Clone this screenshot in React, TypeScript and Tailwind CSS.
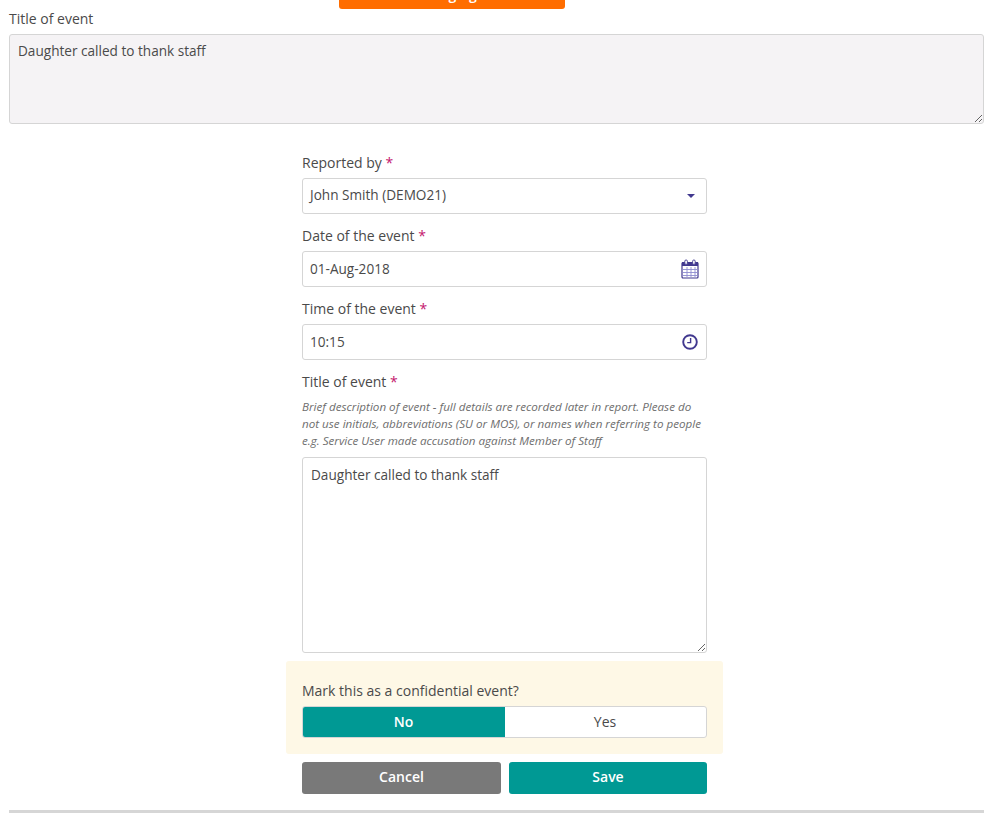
import type { ReactNode } from 'react'

// Form for a reported event, cropped as if the page was scrolled a little

const labelClass = 'block text-[14px] leading-[20px] font-medium text-[#4a4a4a]'
const inputClass =
  'flex h-[36px] items-center justify-between rounded-[3px] border border-[#d5d5d5] bg-white pl-[7px] pr-[8px] text-[13.6px] text-[#4a4a4a]'

function Required() {
  return <span className="text-[#c4166e]"> *</span>
}

function CalendarIcon() {
  return (
    <svg width="18" height="20" viewBox="0 0 18 20" fill="none" className="-mr-[1px] block">
      <rect x="1" y="3.5" width="16" height="15.5" rx="1" stroke="#41388f" strokeWidth="1.2" />
      <rect x="1" y="3" width="16" height="4" fill="#41388f" />
      <path d="M6 8v10M10 8v10M14 8v10M1.5 10.5h15M1.5 13.5h15M1.5 16.5h15" stroke="#8f8cd0" strokeWidth="0.9" />
      <rect x="3.8" y="1" width="2.6" height="4.4" rx="1.2" fill="#fff" stroke="#41388f" strokeWidth="0.9" />
      <rect x="11.6" y="1" width="2.6" height="4.4" rx="1.2" fill="#fff" stroke="#41388f" strokeWidth="0.9" />
    </svg>
  )
}

function ClockIcon() {
  return (
    <svg width="16" height="16" viewBox="0 0 16 16" fill="none" className="block">
      <circle cx="8" cy="8" r="6.8" stroke="#41388f" strokeWidth="1.9" />
      <path d="M8.6 4v4.6H5.2" stroke="#41388f" strokeWidth="1.4" />
    </svg>
  )
}

function Field({ label, children }: { label: string; children: ReactNode }) {
  return (
    <div className="mb-[12px]">
      <label className={labelClass}>
        {label}
        <Required />
      </label>
      <div className={`${inputClass} mt-[5px]`}>{children}</div>
    </div>
  )
}

export default function App() {
  return (
    <div className="h-[813px] overflow-hidden bg-white font-['Open_Sans',sans-serif]">
      <div className="ml-[339px] flex h-[9px] w-[226px] items-end">
        <button className="flex h-[30px] w-full shrink-0 items-center justify-center rounded-[3px] bg-[#ff6d00] text-[14px] font-semibold text-white">
          Staging
        </button>
      </div>

      <div className="ml-[9px] w-[975px]">
        <label className={labelClass}>Title of event</label>
        <textarea
          readOnly
          defaultValue="Daughter called to thank staff"
          className="mt-[5px] block h-[90px] w-full rounded-[3px] border border-[#d5d5d5] bg-[#f5f3f5] px-[8px] py-[6px] text-[13.6px] leading-[20px] text-[#4a4a4a] outline-none"
        />
      </div>

      <div className="ml-[302px] mt-[29px] w-[405px]">
        <Field label="Reported by">
          <span className="-translate-y-[1px]">John Smith (DEMO21)</span>
          <span className="mr-[3px] h-0 w-0 border-x-[4px] border-t-[4px] border-x-transparent border-t-[#41388f]" />
        </Field>

        <Field label="Date of the event">
          <span>01-Aug-2018</span>
          <CalendarIcon />
        </Field>

        <Field label="Time of the event">
          <span>10:15</span>
          <ClockIcon />
        </Field>

        <label className={labelClass}>
          Title of event
          <Required />
        </label>
        <p className="mt-[6px] text-[11.65px] leading-[17px] text-[#6e6e6e] italic">
          Brief description of event - full details are recorded later in report. Please do not use initials, abbreviations (SU or MOS), or names when referring to people e.g. Service User made accusation against Member of Staff
        </p>
        <textarea
          readOnly
          defaultValue="Daughter called to thank staff"
          className="mt-[8px] block h-[196px] w-full rounded-[3px] border border-[#d5d5d5] bg-white px-[8px] py-[7px] text-[13.6px] leading-[20px] text-[#4a4a4a] outline-none"
        />
      </div>

      <div className="ml-[286px] mt-[8px] w-[437px] rounded-[3px] bg-[#fef8e6] px-[16px] pt-[20px] pb-[16px]">
        <div className={labelClass}>Mark this as a confidential event?</div>
        <div className="mt-[5px] flex h-[32px] overflow-hidden rounded-[3px] border border-[#d5d5d5] bg-white pb-[2px] text-[14px]">
          <div className="-m-[1px] -mb-[3px] flex w-[203px] items-center justify-center rounded-l-[3px] bg-[#009994] pb-[2px] font-semibold text-white">No</div>
          <div className="flex flex-1 items-center justify-center font-medium text-[#4a4a4a]">Yes</div>
        </div>
      </div>

      <div className="ml-[302px] mt-[8px] flex w-[405px] gap-[8px]">
        <button className="h-[32px] w-[199px] rounded-[3px] bg-[#797979] pb-[3px] text-[14px] font-semibold text-white">Cancel</button>
        <button className="h-[32px] w-[198px] rounded-[3px] bg-[#009994] pb-[3px] text-[14px] font-semibold text-white">Save</button>
      </div>

      <div className="ml-[9px] mt-[16px] h-[3px] w-[975px] bg-[#d6d6d6]" />
    </div>
  )
}
